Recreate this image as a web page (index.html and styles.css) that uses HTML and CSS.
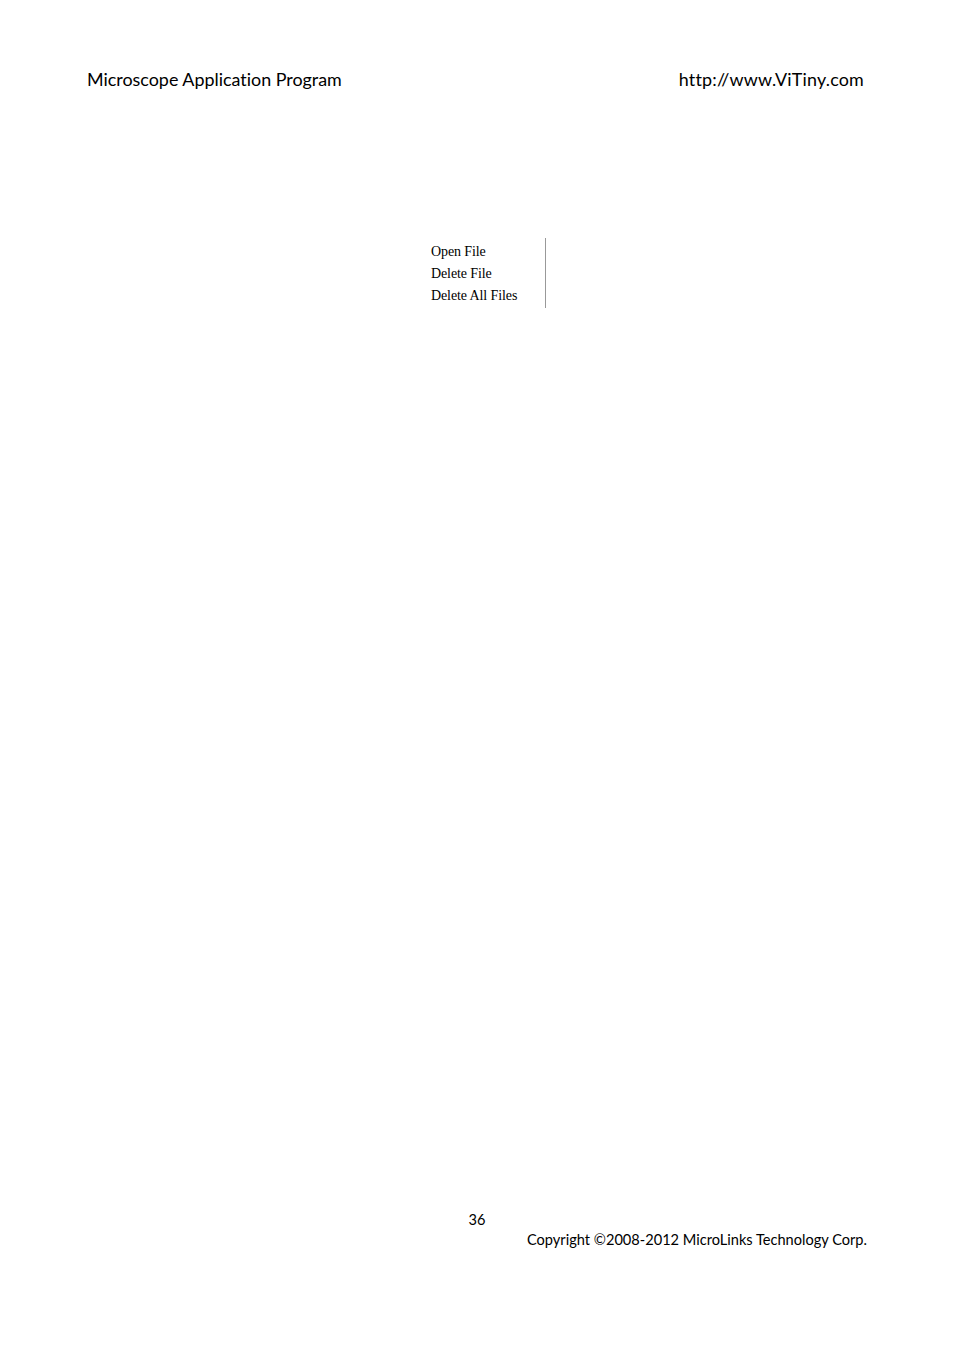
FILE: index.html
```html
<!DOCTYPE html>
<html>
<head>
<meta charset="utf-8">
<link rel="stylesheet" href="styles.css">
</head>
<body>
<div class="page">
  <header class="header">
    <span class="title">Microscope Application Program</span>
    <span class="url">http://www.ViTiny.com</span>
  </header>
  <main class="main">
    <div class="menu">
      <div class="item">Open File</div>
      <div class="item">Delete File</div>
      <div class="item">Delete All Files</div>
    </div>
  </main>
  <footer class="footer">
    <div class="pagenum">36</div>
    <div class="copy">Copyright ©2008-2012 MicroLinks Technology Corp.</div>
  </footer>
</div>
</body>
</html>
```
FILE: styles.css
```css
html, body { margin: 0; padding: 0; background: #fff; }
.page {
  width: 954px;
  height: 1350px;
  display: flex;
  flex-direction: column;
  font-family: Lato, "Open Sans", sans-serif;
  font-variant-ligatures: none;
  color: #000;
}
.header {
  display: flex;
  justify-content: space-between;
  padding: 68px 90px 0 87px;
  font-size: 17.9px;
  line-height: 22px;
}
.url { letter-spacing: 0.2px; }
.main {
  flex: 1;
  display: flex;
  flex-direction: column;
  padding-top: 148px;
  padding-left: 431px;
}
.menu {
  width: 115px;
  height: 70px;
  border-right: 1px solid #999;
  box-sizing: border-box;
  font-family: "Liberation Serif", serif;
  font-size: 14px;
  letter-spacing: -0.1px;
  line-height: 22px;
  padding-top: 3px;
}
.footer {
  padding-bottom: 100px;
  font-size: 14.6px;
  line-height: 20px;
}
.pagenum { text-align: center; }
.copy { text-align: right; padding-right: 87px; }
```
